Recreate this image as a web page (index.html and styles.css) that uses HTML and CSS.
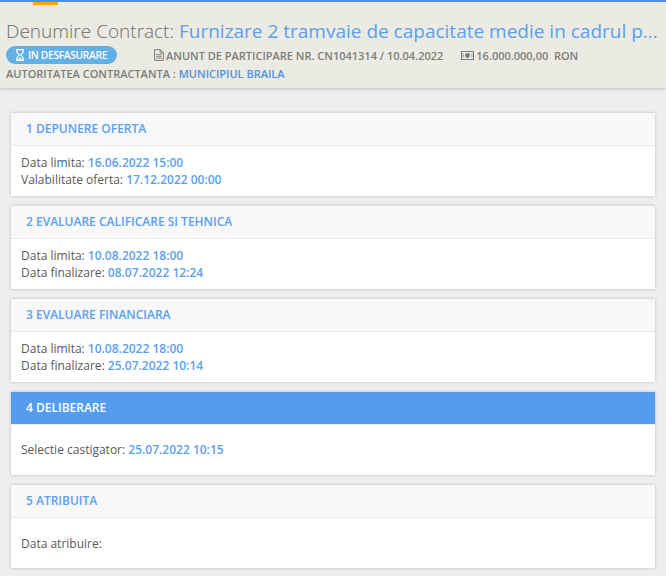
FILE: index.html
```html
<!DOCTYPE html>
<html lang="ro">
<head>
<meta charset="utf-8">
<title>Contract</title>
<link rel="stylesheet" href="styles.css">
</head>
<body>
<header class="top">
  <div class="tab"></div>
  <h1 class="title"><span class="title-label">Denumire Contract:</span> <span class="blue">Furnizare 2 tramvaie de capacitate medie in cadrul p...</span></h1>
  <div class="meta">
    <span class="badge"><svg class="ico-glass" viewBox="0 0 10 12"><path d="M1 .6h8M1 11.400h8M2 1v2.200c0 1.300 2.200 1.900 2.200 2.800S2 7.500 2 8.800V11M8 1v2.200c0 1.300-2.200 1.900-2.200 2.800S8 7.500 8 8.800V11" fill="none" stroke="#fff" stroke-width="1.200"/><path d="M3 10.500c.5-1.200 1.500-1.700 2-1.700s1.500.5 2 1.700z" fill="#fff"/></svg>IN DESFASURARE</span>
    <span class="notice"><svg class="ico-doc" viewBox="0 0 10 12"><path d="M.6.6h5.800l3 3v7.800H.6z M6.200.8v3h3" fill="none" stroke="#7d7d78" stroke-width="1"/><path d="M2.200 5.500h5.600M2.200 7.300h5.600M2.200 9.100h5.600" stroke="#7d7d78" stroke-width=".9"/></svg>ANUNT DE PARTICIPARE NR. CN1041314 / 10.04.2022</span>
    <span class="value"><svg class="ico-money" viewBox="0 0 13 9"><rect x=".5" y=".5" width="12" height="8" fill="none" stroke="#7d7d78"/><circle cx="6.500" cy="4.500" r="2.400" fill="#7d7d78"/><path d="M2 2.500v4M11 2.500v4" stroke="#7d7d78" stroke-width=".8"/></svg>16.000.000,00&nbsp; RON</span>
  </div>
  <div class="authority">AUTORITATEA CONTRACTANTA : <span class="blue">MUNICIPIUL BRAILA</span></div>
</header>
<main class="steps">
  <section class="card">
    <h2 class="card-head">1 DEPUNERE OFERTA</h2>
    <div class="card-body">
      <div>Data limita: <b class="date">16.06.2022 15:00</b></div>
      <div>Valabilitate oferta: <b class="date">17.12.2022 00:00</b></div>
    </div>
  </section>
  <section class="card">
    <h2 class="card-head">2 EVALUARE CALIFICARE SI TEHNICA</h2>
    <div class="card-body">
      <div>Data limita: <b class="date">10.08.2022 18:00</b></div>
      <div>Data finalizare: <b class="date">08.07.2022 12:24</b></div>
    </div>
  </section>
  <section class="card">
    <h2 class="card-head">3 EVALUARE FINANCIARA</h2>
    <div class="card-body">
      <div>Data limita: <b class="date">10.08.2022 18:00</b></div>
      <div>Data finalizare: <b class="date">25.07.2022 10:14</b></div>
    </div>
  </section>
  <section class="card active">
    <h2 class="card-head">4 DELIBERARE</h2>
    <div class="card-body">
      <div>Selectie castigator: <b class="date">25.07.2022 10:15</b></div>
    </div>
  </section>
  <section class="card">
    <h2 class="card-head">5 ATRIBUITA</h2>
    <div class="card-body">
      <div>Data atribuire:</div>
    </div>
  </section>
</main>
</body>
</html>
```
FILE: styles.css
```css
* { box-sizing: border-box; }
html, body { margin: 0; padding: 0; height: 100%; overflow: hidden; }
body {
  background: #eeeeee;
  font-family: "Open Sans", "Liberation Sans", sans-serif;
  font-size: 12px;
  color: #595959;
}
.top {
  height: 88px;
  background: #ecebe3;
  border-top: 2px solid #4f90dc;
  box-shadow: 0 1px 3px rgba(0, 0, 0, .2);
  padding: 0 6px;
}
.tab { width: 25px; height: 3px; margin-left: 27px; background: #f0ad00; }
.title {
  margin: 12px 0 0;
  font-size: 19px;
  line-height: 28px;
  font-weight: 400;
  white-space: nowrap;
  color: #6c6c68;
}
.title-label { font-weight: 300; }
.blue { color: #5b9fef; }
.meta { display: flex; align-items: center; height: 18px; margin-top: 1px; font-size: 11px; font-weight: 600; color: #7d7d78; }
.badge {
  display: flex;
  align-items: center;
  width: 111px;
  height: 18px;
  padding-left: 9px;
  border-radius: 9px;
  background: #62b0e5;
  color: #fff;
  font-size: 10.200px;
  letter-spacing: -.3px;
  font-weight: 600;
}
.ico-glass { width: 10px; height: 12px; margin-right: 3px; }
.notice { display: flex; align-items: center; margin-left: 37px; }
.ico-doc { width: 10px; height: 12px; margin-right: 2px; }
.value { display: flex; align-items: center; margin-left: 18px; }
.ico-money { width: 13px; height: 9px; margin-right: 2px; }
.authority { margin-top: 2px; font-size: 11px; line-height: 15px; font-weight: 600; color: #7d7d78; }
.authority .blue { color: #4d94e0; }
.steps { display: flex; flex-direction: column; gap: 10px; padding: 25px 11px 0; }
.card {
  height: 83px;
  background: #fff;
  box-shadow: 0 0 3px rgba(0, 0, 0, .22);
}
.card-head {
  height: 33px;
  margin: 0;
  padding-left: 15px;
  background: #f8f8f8;
  border-bottom: 1px solid #ecebe3;
  font-size: 12px;
  line-height: 32px;
  font-weight: 600;
  color: #5b9fef;
}
.card-body {
  height: 50px;
  padding: 0 10px;
  display: flex;
  flex-direction: column;
  justify-content: center;
  line-height: 17px;
  color: #595959;
}
.date { font-weight: 600; color: #5b9fef; }
.active .card-head { background: #539cee; border-bottom-color: #e8eef5; color: #fff; }
.active .card-body { padding-bottom: 1px; }
```
